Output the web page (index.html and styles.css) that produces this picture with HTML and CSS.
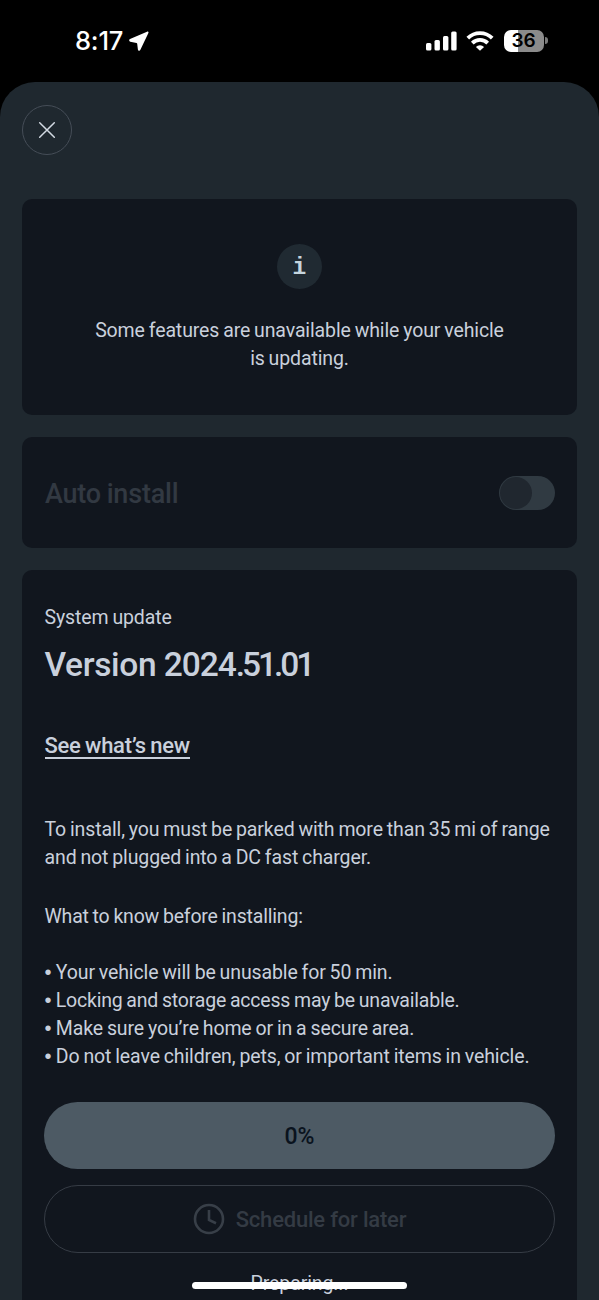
FILE: index.html
```html
<!DOCTYPE html>
<html lang="en">
<head>
<meta charset="utf-8">
<meta name="viewport" content="width=device-width, initial-scale=1">
<title>System update</title>
<link rel="stylesheet" href="styles.css">
</head>
<body>
<div class="phone">
  <header class="status">
    <div class="status-time">
      <span class="clock-text">8:17</span>
      <svg class="location" width="20" height="20" viewBox="0 0 20 20"><path d="M18 .7 1 8C-.2 8.600-.1 10.400 1.300 10.700L7.500 12c.4.1.6.3.7.7l.7 5.700c.2 1.500 1.900 1.700 2.500.4L19.400 2c.4-.9-.4-1.700-1.400-1.300Z" fill="#fff"/></svg>
    </div>
    <div class="status-icons">
      <svg width="31" height="20" viewBox="0 0 31 20" fill="#fff"><rect x="0" y="12" width="5.400" height="7.500" rx="1.500"/><rect x="8.500" y="9" width="5.400" height="10.500" rx="1.500"/><rect x="17" y="5" width="5.400" height="14.500" rx="1.500"/><rect x="25.200" y="0.500" width="5.400" height="19" rx="1.500"/></svg>
      <svg class="wifi" width="28" height="20" viewBox="0 0 28 20" fill="none" stroke="#fff" stroke-width="3.800"><path d="M1.800 7.200a17.300 17.300 0 0 1 24.400 0"/><path d="M6.300 12.100a11 11 0 0 1 15.400 0"/><path d="M14 19.800 9.900 15.900a5.900 5.900 0 0 1 8.200 0Z" fill="#fff" stroke="none"/></svg>
      <div class="battery"><div class="battery-body">36</div><i class="battery-tip"></i></div>
    </div>
  </header>
  <main class="sheet">
    <button class="close" aria-label="Close"><svg width="18" height="18" viewBox="0 0 18 18" stroke="#d3dae3" stroke-width="1.500" stroke-linecap="round"><path d="M1.700 1.700 16.300 16.300M16.300 1.700 1.700 16.300"/></svg></button>
    <section class="card notice">
      <span class="info">i</span>
      <p>Some features are unavailable while your vehicle<br>is updating.</p>
    </section>
    <section class="card auto">
      <h2>Auto install</h2>
      <span class="toggle"><i></i></span>
    </section>
    <section class="card update">
      <p class="label">System update</p>
      <h1>Version <span class="year">2024</span><span class="build">.51.01</span></h1>
      <a class="news">See what’s new</a>
      <p class="requirements">To install, you must be parked with more than 35 mi of range<br>and not plugged into a DC fast charger.</p>
      <p class="know">What to know before installing:</p>
      <ul>
        <li><b>•</b> Your vehicle will be unusable for 50 min.</li>
        <li class="storage"><b>•</b> Locking and storage access may be unavailable.</li>
        <li><b>•</b> Make sure you’re home or in a secure area.</li>
        <li><b>•</b> Do not leave children, pets, or important items in vehicle.</li>
      </ul>
      <div class="progress">0%</div>
      <button class="schedule"><svg width="32" height="32" viewBox="0 0 32 32" fill="none" stroke="#383f48" stroke-width="2.600"><circle cx="16" cy="16" r="14"/><path d="M16 7v10l7 3.200"/></svg><span>Schedule for later</span></button>
      <p class="preparing">Preparing...</p>
    </section>
  </main>
  <div class="home-bar"></div>
</div>
</body>
</html>
```
FILE: styles.css
```css
* { box-sizing: border-box; }
body { margin: 0; background: #000; }
p, h1, h2, ul { margin: 0; padding: 0; }
ul { list-style: none; }
button { background: none; padding: 0; font: inherit; }
svg { display: block; flex: none; }
.phone { position: relative; width: 599px; height: 1300px; overflow: hidden; background: #000; font: 400 19.5px/28px Roboto, "Liberation Sans", sans-serif; letter-spacing: -.12px; word-spacing: -.8px; color: #c9d0dc; }
.status { height: 82px; padding: 0 51.500px 0 75px; display: flex; justify-content: space-between; color: #fff; font-family: Inter, sans-serif; }
.status-time { display: flex; gap: 6px; padding-top: 24px; height: 58px; align-items: center; }
.clock-text { font-size: 25.5px; line-height: 30px; font-weight: 500; letter-spacing: -.2px; }
.location { margin-top: -1px; }
.status-icons { display: flex; align-items: center; height: 81px; }
.wifi { margin-left: 9.500px; }
.battery { display: flex; align-items: center; gap: 1px; margin-left: 9.500px; }
.battery-body { width: 40px; height: 22px; border-radius: 7px; background: linear-gradient(90deg, #fff 36%, #8b8b8b 36%); color: #000; font-size: 19px; line-height: 22px; font-weight: 600; text-align: center; }
.battery-tip { width: 3px; height: 7px; border-radius: 0 3px 3px 0; background: #7b7b7b; }
.sheet { height: 1218px; background: #1f282f; border-radius: 35px 35px 0 0; padding: 22px 22px 0; display: flex; flex-direction: column; }
.close { width: 50px; height: 50px; border: 1.5px solid #454d57; border-radius: 50%; display: grid; place-items: center; flex: none; margin-top: .5px; }
.card { background: #11161e; border-radius: 10px; flex: none; }
.notice { height: 216px; margin-top: 44.500px; padding-top: 45px; text-align: center; }
.info { display: block; width: 45px; height: 45px; margin: 0 auto 28px; border-radius: 50%; background: #202a32; color: #c5d5de; font: 700 23px/48px "Liberation Mono", monospace; letter-spacing: 0; }
.auto { height: 111px; margin-top: 22px; padding: 0 22px 0 23px; display: flex; justify-content: space-between; align-items: center; }
h2 { font-size: 27px; font-weight: 500; color: #323942; line-height: 32px; letter-spacing: -.2px; padding-top: 2px; }
.toggle { width: 56px; height: 34px; border-radius: 17px; background: #303a42; padding: 1px; }
.toggle i { display: block; width: 32px; height: 32px; border-radius: 50%; background: #20272f; }
.update { height: 760px; margin-top: 22px; padding: 34px 22px 0; border-radius: 10px 10px 0 0; display: flex; flex-direction: column; }
.update > p, ul, h1 { padding-left: .5px; }
h1 { font-size: 33.5px; font-weight: 500; line-height: 42px; height: 40px; margin-top: 12px; white-space: nowrap; letter-spacing: -.35px; word-spacing: -.5px; }
.year { letter-spacing: -1px; }
.build { letter-spacing: -3.05px; }
.news { align-self: flex-start; margin-left: .5px; height: 27px; border-bottom: 2px solid #c9d0dc; margin-top: 48px; font-size: 22px; font-weight: 500; line-height: 28px; white-space: nowrap; letter-spacing: -.25px; }
.requirements { margin-top: 57px; white-space: nowrap; }
.know { margin-top: 31px; letter-spacing: -.19px; }
ul { margin-top: 28px; }
li { white-space: nowrap; height: 28px; }
li b { font: 400 20px/20px "Liberation Sans", sans-serif; letter-spacing: .4px; }
.storage { letter-spacing: -.2px; }
.progress { height: 67px; flex: none; margin-top: 31px; border-radius: 34px; background: #4d5a64; color: #0a131e; text-align: center; font-size: 23px; font-weight: 500; line-height: 69px; }
.schedule { height: 68px; flex: none; margin-top: 16px; border: 1.5px solid #363c45; border-radius: 34px; display: flex; align-items: center; justify-content: center; gap: 11px; color: #343b44; font-size: 22px; font-weight: 500; letter-spacing: -.2px; }
.schedule span { padding-top: 2px; }
.update > .preparing { text-align: center; margin-top: 17px; padding-left: 0; letter-spacing: -.1px; }
.home-bar { position: absolute; left: 192px; top: 1282px; width: 215px; height: 7px; border-radius: 4px; background: #fff; }
```
